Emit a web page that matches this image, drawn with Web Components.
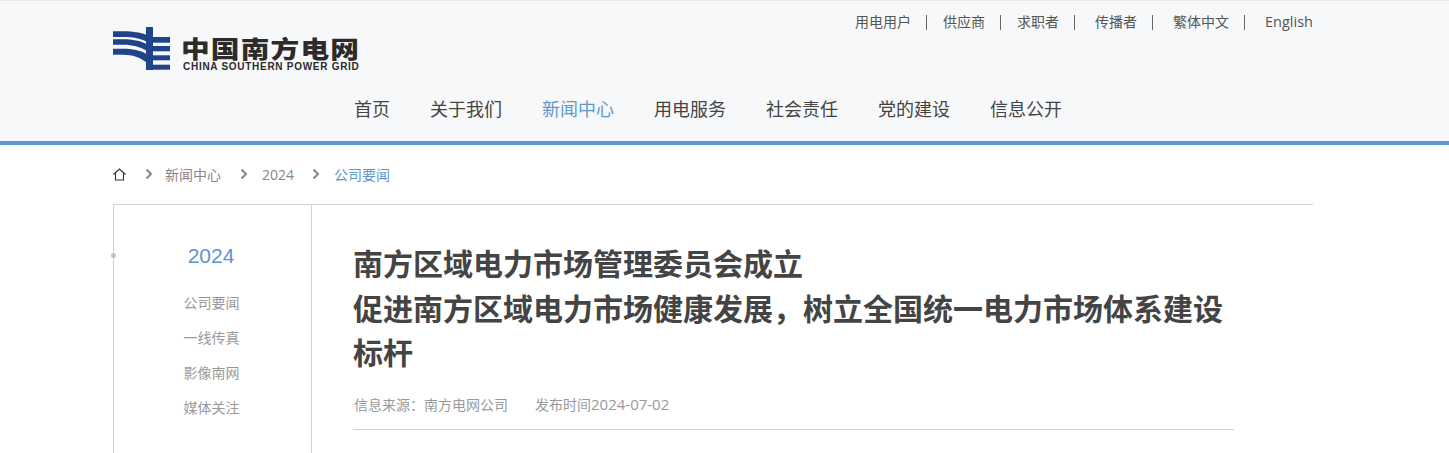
<!DOCTYPE html>
<html lang="zh">
<head>
<meta charset="utf-8">
<title>南方电网</title>
<style>
html,body{margin:0;padding:0;background:#fff;}
body{font-family:"Liberation Sans","Noto Sans CJK SC",sans-serif;height:453px;overflow:hidden;}
</style>
</head>
<body>
<site-header></site-header>
<bread-crumb></bread-crumb>
<article-panel></article-panel>
<script>
class SiteHeader extends HTMLElement {
	constructor(){
		super();
		this.attachShadow({mode:"open"});
		// text, gap before the separator, gap after it
		let top = [["用电用户",0,0],["供应商",15,16],["求职者",15,16],["传播者",15,20],["繁体中文",15,20],["English",15,20]];
		let nav = ["首页","关于我们","新闻中心","用电服务","社会责任","党的建设","信息公开"];
		this.shadowRoot.innerHTML = `
			<style>
				:host {
					display: block;
					height: 140px;
					background: #f7f8fa;
					border-top: 1px solid #e8e8e8;
					border-bottom: 4px solid #5f98cd;
					font-family: "Noto Sans CJK SC", sans-serif;
				}
				.wrap {
					width: 1200px;
					margin-left: 113px;
					height: 100%;
				}
				.row {
					display: flex;
					justify-content: space-between;
					align-items: flex-start;
					height: 85px;
				}
				.logo {
					display: flex;
					align-items: flex-start;
					gap: 13px;
					padding-top: 26px;
				}
				.logo svg { display: block; }
				.brand { display: flex; flex-direction: column; width: 178px; color: #2b2b2b; }
				.brand b {
					font-size: 24px;
					line-height: 24px;
					letter-spacing: 1px;
					margin: 9px 0 0 -2px;
					white-space: nowrap;
					font-weight: 900;
					transform: scaleX(1.195);
					transform-origin: 0 0;
				}
				.brand span {
					font: bold 10px/10px "Liberation Sans", sans-serif;
					white-space: nowrap;
					letter-spacing: 0.720px;
					margin-top: 2px;
				}
				.top {
					display: flex;
					padding-top: 10px;
					font-size: 14px;
					line-height: 20px;
					color: #555;
				}
				.top a { white-space: nowrap; }
				.top i { width: 1px; height: 15px; margin-top: 4px; background: #666; }
				.top a:last-child { font-size: 14.500px; font-family: "Open Sans", sans-serif; margin-top: 1px; }
				nav {
					display: flex;
					gap: 40px;
					padding-left: 241px;
					font-size: 18px;
					line-height: 24px;
					color: #444;
					padding-top: 10px;
				}
				nav a.on { color: #5f98cd; }
			</style>
			<div class="wrap">
				<div class="row">
					<div class="logo">
						<svg width="57" height="44" viewBox="0 0 57 44" fill="#1f4489">
							<path d="M0 4.300H10C20 4.300 27 5.500 33 7.700V14.300C27 11.500 20 10 10 10H0Z"/>
							<path d="M0 12.300H10C20 12.300 27 14 33 16.700V23.300C27 20 20 17.700 10 17.700H0Z"/>
							<path d="M0 21.700H10C20 21.700 27 23.500 33 26.700V35C27 30.500 20 27.700 10 27.700H0Z"/>
							<rect x="33" y="0" width="7" height="43"/>
							<rect x="40" y="10" width="17" height="5.700"/>
							<rect x="40" y="19" width="17" height="5.300"/>
							<rect x="40" y="28.300" width="17" height="5"/>
							<rect x="40" y="37.700" width="17" height="5"/>
						</svg>
						<div class="brand">
							<b>中国南方电网</b>
							<span>CHINA SOUTHERN POWER GRID</span>
						</div>
					</div>
					<div class="top">${top.map(([t,a,b])=>(a?`<i style="margin-left:${a}px;margin-right:${b}px"></i>`:"")+`<a>${t}</a>`).join("")}</div>
				</div>
				<nav>${nav.map((t,i)=>`<a class="${i==2?"on":""}">${t}</a>`).join("")}</nav>
			</div>
		`;
	}
}
customElements.define("site-header",SiteHeader);

class BreadCrumb extends HTMLElement {
	constructor(){
		super();
		this.attachShadow({mode:"open"});
		let arrow = `<svg width="8" height="12" viewBox="0 0 8 12" fill="none" stroke="#888" stroke-width="2"><path d="M1.500 1.500L6 6L1.500 10.500"/></svg>`;
		this.shadowRoot.innerHTML = `
			<style>
				:host {
					display: block;
					width: 1200px;
					margin-left: 113px;
					height: 59px;
					font-family: "Noto Sans CJK SC", sans-serif;
				}
				.crumbs {
					display: flex;
					align-items: center;
					height: 58px;
					font-size: 14px;
					color: #888;
				}
				.home { margin-right: 19px; display: block; }
				svg { display: block; }
				span { margin: 0 19px 0 12px; white-space: nowrap; }
				.year { font: 14px "Open Sans", sans-serif; margin: 0 18px 0 14px; }
				.on { color: #5f98cd; margin-right: 0; margin-left: 14px; }
			</style>
			<div class="crumbs">
				<svg class="home" width="13" height="13" viewBox="0 0 13 13" fill="none" stroke="#333" stroke-width="1.100"><path d="M0.500 6.500L6.500 1L12.500 6.500M2.500 5.500V12H10.500V5.500"/></svg>
				${arrow}<span>新闻中心</span>${arrow}<span class="year">2024</span>${arrow}<span class="on">公司要闻</span>
			</div>
		`;
	}
}
customElements.define("bread-crumb",BreadCrumb);

class ArticlePanel extends HTMLElement {
	constructor(){
		super();
		this.attachShadow({mode:"open"});
		let side = ["公司要闻","一线传真","影像南网","媒体关注"];
		this.shadowRoot.innerHTML = `
			<style>
				:host {
					display: grid;
					grid-template-columns: 198px 1fr;
					width: 1199px;
					height: 260px;
					margin-left: 113px;
					border-top: 1px solid #d2d2d2;
					border-left: 1px solid #d2d2d2;
					font-family: "Noto Sans CJK SC", sans-serif;
					position: relative;
				}
				.dot {
					position: absolute;
					left: -3px;
					top: 48px;
					width: 5px;
					height: 5px;
					border-radius: 50%;
					background: #a9c8e4;
				}
				aside {
					border-right: 1px solid #d2d2d2;
					text-align: center;
					padding-right: 2px;
				}
				.year {
					font: 21px/28px "Liberation Sans", sans-serif;
					color: #5b95d0;
					margin-top: 37px;
					margin-bottom: 15px;
					padding-right: 1px;
				}
				aside a {
					display: block;
					font-size: 14px;
					line-height: 35px;
					color: #999;
				}
				main { padding: 35px 79px 0 41px; }
				h1 {
					margin: 0;
					font-size: 30px;
					line-height: 44.500px;
					font-weight: 700;
					color: #444;
				}
				.meta {
					display: flex;
					gap: 27px;
					margin-top: 20px;
					padding: 0 0 14px 1px;
					border-bottom: 1px solid #d2d2d2;
					font-size: 14px;
					line-height: 20px;
					color: #999;
				}
				.date { font-family: "Open Sans", "Noto Sans CJK SC", sans-serif; }
				.date em { font-style: normal; font-size: 15px; }
			</style>
			<i class="dot"></i>
			<aside>
				<div class="year">2024</div>
				${side.map(t=>`<a>${t}</a>`).join("")}
			</aside>
			<main>
				<h1>南方区域电力市场管理委员会成立<br>促进南方区域电力市场健康发展，树立全国统一电力市场体系建设标杆</h1>
				<div class="meta"><span>信息来源：南方电网公司</span><span class="date">发布时间<em>2024-07-02</em></span></div>
			</main>
		`;
	}
}
customElements.define("article-panel",ArticlePanel);
</script>
</body>
</html>
